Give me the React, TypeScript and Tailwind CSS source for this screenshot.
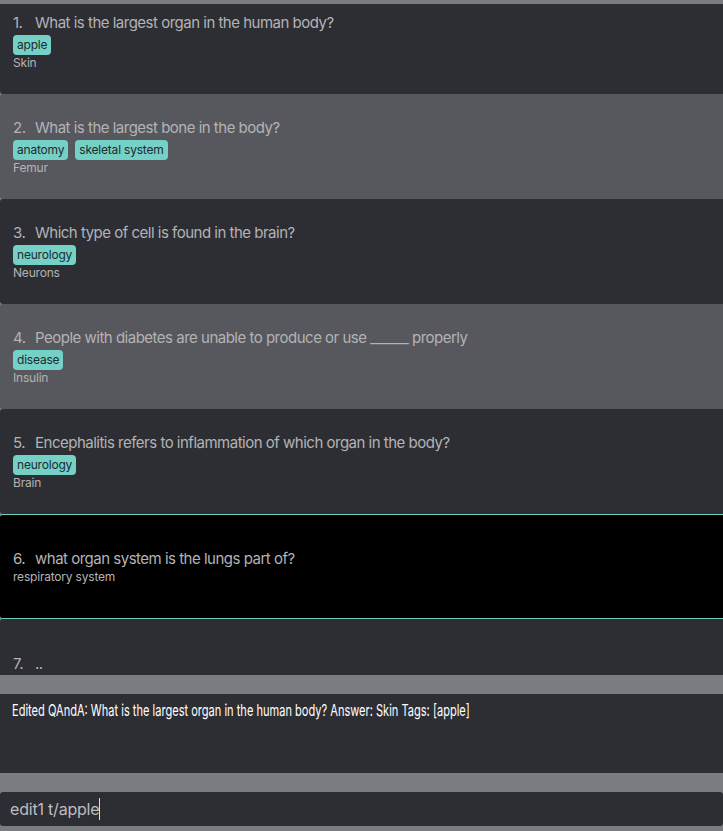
import React from 'react';

interface Card {
  id: number;
  question: string;
  answer: string;
  tags: string[];
}

const cards: Card[] = [
  { id: 1, question: 'What is the largest organ in the human body?', answer: 'Skin', tags: ['apple'] },
  { id: 2, question: 'What is the largest bone in the body?', answer: 'Femur', tags: ['anatomy', 'skeletal system'] },
  { id: 3, question: 'Which type of cell is found in the brain?', answer: 'Neurons', tags: ['neurology'] },
  { id: 4, question: 'People with diabetes are unable to produce or use ______ properly', answer: 'Insulin', tags: ['disease'] },
  { id: 5, question: 'Encephalitis refers to inflammation of which organ in the body?', answer: 'Brain', tags: ['neurology'] },
  { id: 6, question: 'what organ system is the lungs part of?', answer: 'respiratory system', tags: [] },
  { id: 7, question: '..', answer: '', tags: [] },
];

const font = { fontFamily: 'Inter, "Open Sans", sans-serif' };

const CardRow: React.FC<{ card: Card; index: number }> = ({ card, index }) => {
  const selected = card.id === 6;
  const bg = selected
    ? 'bg-black border-y border-[#6fcfc2]'
    : index % 2 === 0
      ? 'bg-[#2d2e33]'
      : 'bg-[#57585d]';
  return (
    <div className={`h-[105px] shrink-0 flex flex-col justify-center px-[13px] rounded-l-[3px] ${bg}`}>
      <div className="flex text-[15px] leading-[20px] text-[#b3b3b6] tracking-[-0.5px]">
        <span className="w-[22px]">{card.id}.</span>
        <span>{card.question}</span>
      </div>
      {card.tags.length > 0 && (
        <div className="flex gap-[7px] mt-[2px]">
          {card.tags.map((t) => (
            <span
              key={t}
              className="bg-[#75d1c6] text-[#1d2b2e] text-[12px] leading-[20px] px-[4px] rounded-[4px] tracking-[-0.2px]"
            >
              {t}
            </span>
          ))}
        </div>
      )}
      {card.answer ? (
        <div className="text-[12px] leading-[14px] text-[#b3b3b6] mt-[1px] tracking-[-0.2px]">
          {card.answer}
        </div>
      ) : (
        <div className="h-[15px]" />
      )}
    </div>
  );
};

const App: React.FC = () => {
  return (
    <div className="w-[723px] h-[831px] bg-[#7b7c80] flex flex-col overflow-hidden" style={font}>
      <div className="mt-[4px] h-[671px] overflow-hidden shrink-0">
        <div className="flex flex-col -mt-[15px]">
          {cards.map((c, i) => (
            <CardRow key={c.id} card={c} index={i} />
          ))}
        </div>
      </div>
      <div className="mt-[19px] h-[79px] shrink-0 bg-[#2d2e33] px-[12px] pt-[6px]">
        <p className="text-white text-[16.5px] leading-[20px] whitespace-nowrap origin-left scale-x-[0.67]">
          Edited QAndA: What is the largest organ in the human body? Answer: Skin Tags: [apple]
        </p>
      </div>
      <div className="mt-[19px] h-[34px] shrink-0 bg-[#2d2e33] rounded-[3px] px-[10px] flex items-center">
        <span className="text-[#bdbdc1] text-[16px] tracking-[-0.2px]">edit1 t/apple</span>
        <span className="w-px h-[22px] bg-[#e0e0e0]" />
      </div>
    </div>
  );
};

export default App;
